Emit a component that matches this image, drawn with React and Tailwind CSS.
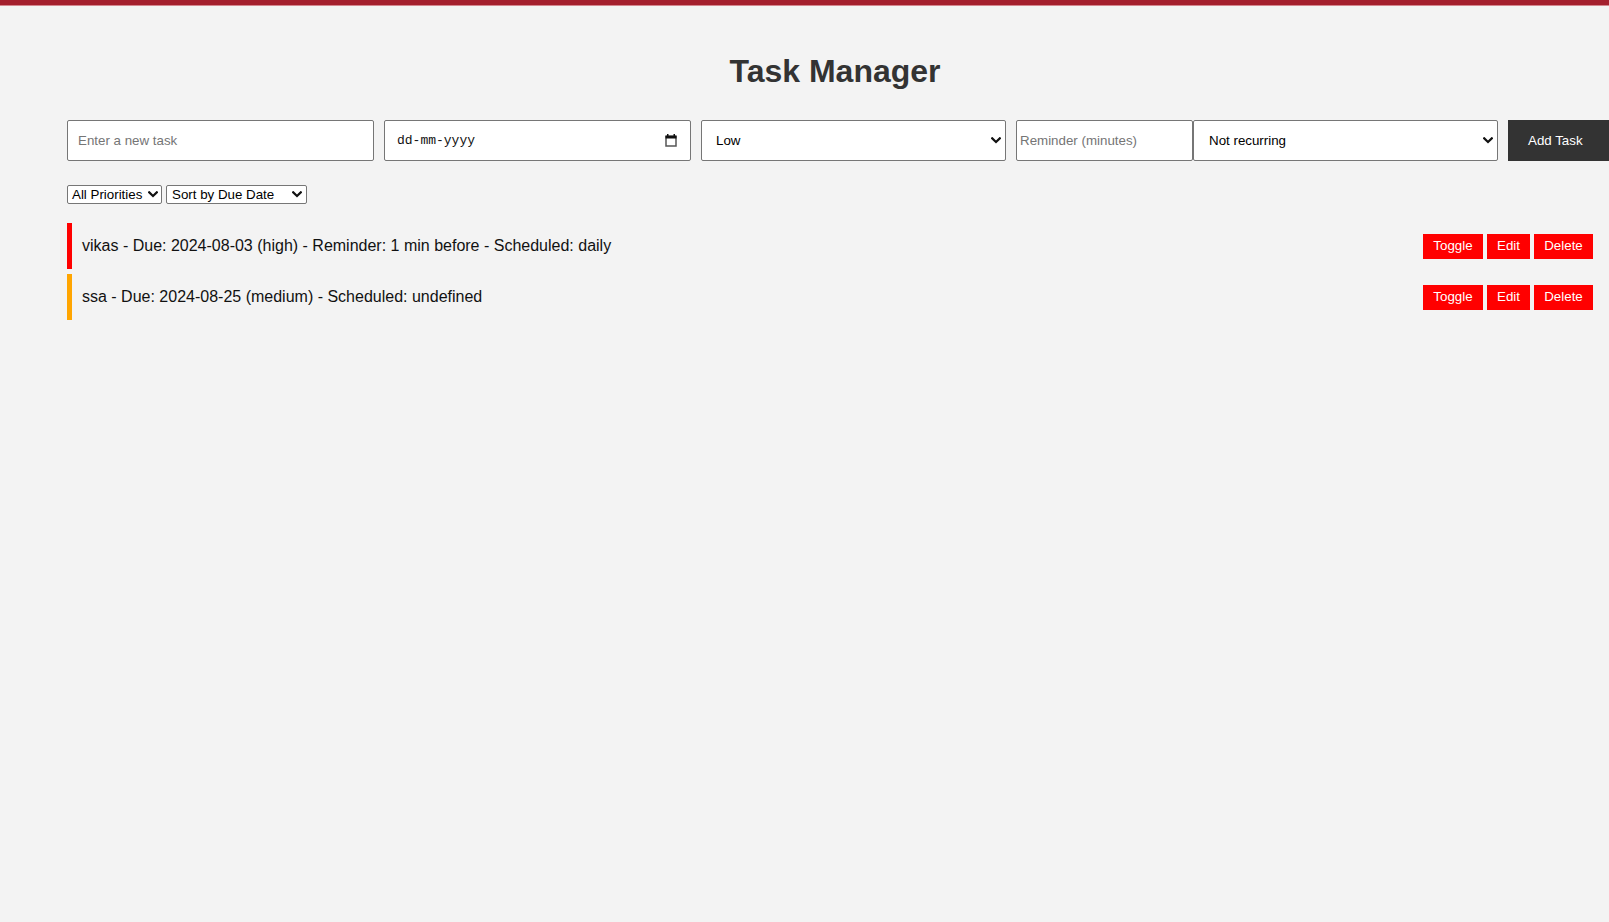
import React from "react";

function Chevron({ className = "" }) {
  return (
    <svg width="10" height="7" viewBox="0 0 10 7" className={className}>
      <path d="M1.2 1.3 L5 5 L8.8 1.3" fill="none" stroke="#111" strokeWidth="2.2" strokeLinecap="square" />
    </svg>
  );
}

function CalendarIcon() {
  return (
    <svg width="12" height="13" viewBox="0 0 12 13">
      <rect x="1" y="2.5" width="10" height="9.5" fill="none" stroke="#555" strokeWidth="1.5" />
      <rect x="0.5" y="1.5" width="11" height="3" fill="#111" />
      <rect x="2" y="0" width="1.5" height="2" fill="#111" />
      <rect x="8.5" y="0" width="1.5" height="2" fill="#111" />
    </svg>
  );
}

function FakeSelect({ label, className = "", textClass = "" }) {
  return (
    <div className={`flex shrink-0 items-center justify-between bg-white border border-[#767676] rounded-[2px] ${className}`}>
      <span className={textClass}>{label}</span>
      <Chevron />
    </div>
  );
}

function TaskRow({ color, text }) {
  return (
    <div
      className={`flex items-center justify-between h-[46px] mb-[5px] border-l-[5px] pl-[10px] pr-[10px] ${color}`}
    >
      <span className="text-[16px] text-[#111]">{text}</span>
      <div className="flex gap-[4px]">
        <button className="h-[25px] w-[60px] bg-[#ff0000] text-white text-[13.33px]">Toggle</button>
        <button className="h-[25px] w-[43px] bg-[#ff0000] text-white text-[13.33px]">Edit</button>
        <button className="h-[25px] w-[59px] bg-[#ff0000] text-white text-[13.33px]">Delete</button>
      </div>
    </div>
  );
}

export default function App() {
  return (
    <div
      className="min-h-[922px] w-full overflow-x-hidden bg-[#f3f3f3] text-black"
      style={{ fontFamily: '"Liberation Sans", Arial, sans-serif' }}
    >
      <div className="h-[5px] bg-[#a41f2d]" />
      <div className="h-px bg-[#d4868e]" />
      <div className="ml-[67px] w-[1536px] pt-[47px]">
        <h1 className="text-[32px] leading-[37px] font-bold text-[#333] text-center">Task Manager</h1>

        <div className="flex items-start mt-[30px] text-[13.33px]">
          <input
            type="text"
            placeholder="Enter a new task"
            className="shrink-0 w-[307px] h-[41px] px-[10px] bg-white border border-[#767676] rounded-[2px] placeholder:text-[#757575] outline-none"
          />
          <div className="shrink-0 ml-[10px] w-[307px] h-[41px] flex items-center justify-between pl-[12px] pr-[13px] bg-white border border-[#767676] rounded-[2px]">
            <span className="text-[13px] text-[#111]" style={{ fontFamily: '"Liberation Mono", "DejaVu Sans Mono", monospace' }}>
              dd-mm-yyyy
            </span>
            <CalendarIcon />
          </div>
          <FakeSelect
            label="Low"
            className="ml-[10px] w-[305px] h-[41px] pl-[14px] pr-[4px]"
          />
          <input
            type="text"
            placeholder="Reminder (minutes)"
            className="shrink-0 ml-[10px] w-[177px] h-[41px] pl-[3px] bg-white border border-[#767676] rounded-[2px] placeholder:text-[#757575] outline-none"
          />
          <FakeSelect
            label="Not recurring"
            className="ml-[0px] w-[305px] h-[41px] pl-[15px] pr-[4px]"
          />
          <button className="shrink-0 ml-[10px] w-[101px] h-[41px] bg-[#333] text-white text-[13.33px] text-left pl-[20px]">
            Add Task
          </button>
        </div>

        <div className="flex gap-[4px] mt-[24px] text-[13.33px]">
          <FakeSelect label="All Priorities" className="w-[95px] h-[19px] pl-[4px] pr-[3px]" />
          <FakeSelect label="Sort by Due Date" className="w-[141px] h-[19px] pl-[5px] pr-[4px]" />
        </div>

        <div className="mt-[19px] w-[1536px]">
          <TaskRow
            color="border-[#ff0000]"
            text="vikas - Due: 2024-08-03 (high) - Reminder: 1 min before - Scheduled: daily"
          />
          <TaskRow color="border-[#ffa500]" text="ssa - Due: 2024-08-25 (medium) - Scheduled: undefined" />
        </div>
      </div>
    </div>
  );
}
